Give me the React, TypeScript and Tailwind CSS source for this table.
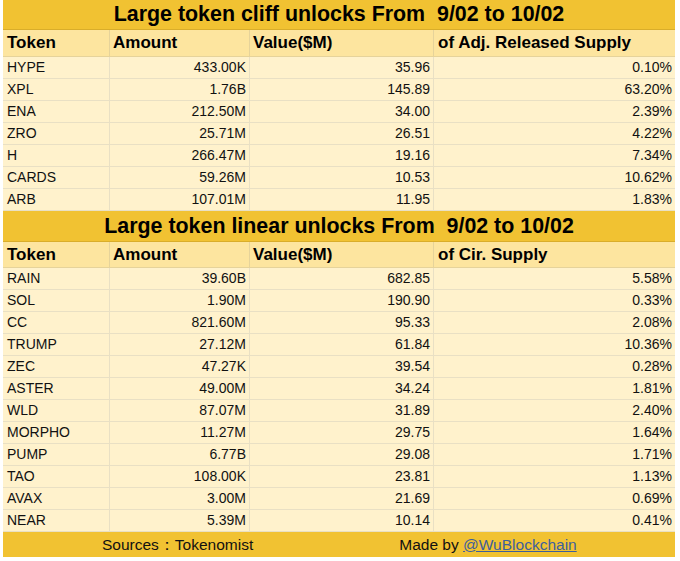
import React from "react";

const cliff: [string, string, string, string][] = [
  ["HYPE", "433.00K", "35.96", "0.10%"],
  ["XPL", "1.76B", "145.89", "63.20%"],
  ["ENA", "212.50M", "34.00", "2.39%"],
  ["ZRO", "25.71M", "26.51", "4.22%"],
  ["H", "266.47M", "19.16", "7.34%"],
  ["CARDS", "59.26M", "10.53", "10.62%"],
  ["ARB", "107.01M", "11.95", "1.83%"],
];

const linear: [string, string, string, string][] = [
  ["RAIN", "39.60B", "682.85", "5.58%"],
  ["SOL", "1.90M", "190.90", "0.33%"],
  ["CC", "821.60M", "95.33", "2.08%"],
  ["TRUMP", "27.12M", "61.84", "10.36%"],
  ["ZEC", "47.27K", "39.54", "0.28%"],
  ["ASTER", "49.00M", "34.24", "1.81%"],
  ["WLD", "87.07M", "31.89", "2.40%"],
  ["MORPHO", "11.27M", "29.75", "1.64%"],
  ["PUMP", "6.77B", "29.08", "1.71%"],
  ["TAO", "108.00K", "23.81", "1.13%"],
  ["AVAX", "3.00M", "21.69", "0.69%"],
  ["NEAR", "5.39M", "10.14", "0.41%"],
];

const cols = "grid grid-cols-[107px_140px_184px_241px]";

function Section({
  title,
  last,
  rows,
  titleH,
  headH,
}: {
  title: string;
  last: string;
  rows: [string, string, string, string][];
  titleH: string;
  headH: string;
}) {
  return (
    <div>
      <div
        className={`${titleH} bg-[#f1c232] border-b border-[#d9ad2a] flex items-center justify-center text-[21.4px] font-bold text-black whitespace-pre`}
      >
        {title}
      </div>
      <div className={`${cols} ${headH} bg-[#fde59f] border-b border-[#e6d39a] text-[17px] font-bold text-black`}>
        <div className="pl-[4px] flex items-center border-r border-[#e6d39a]">Token</div>
        <div className="pl-[3px] flex items-center border-r border-[#e6d39a]">Amount</div>
        <div className="pl-[3px] flex items-center border-r border-[#e6d39a]">Value($M)</div>
        <div className="pl-[4px] flex items-center">{last}</div>
      </div>
      {rows.map((r, i) => (
        <div key={i} className={`${cols} h-[22px] bg-[#fff2cc] border-b border-[#e9e0c4] text-[14px] text-[#111]`}>
          <div className="pl-[4px] flex items-center border-r border-[#e9e0c4]">{r[0]}</div>
          <div className="pr-[3px] flex items-center justify-end border-r border-[#e9e0c4]">{r[1]}</div>
          <div className="pr-[3px] flex items-center justify-end border-r border-[#e9e0c4]">{r[2]}</div>
          <div className="pr-[3px] flex items-center justify-end">{r[3]}</div>
        </div>
      ))}
    </div>
  );
}

export default function App() {
  return (
    <div
      className="w-[680px] h-[561px] bg-white overflow-hidden"
      style={{ fontFamily: '"Liberation Sans", Arial, sans-serif' }}
    >
      <div className="ml-[3px] w-[672px]">
        <Section
          title={"Large token cliff unlocks From  9/02 to 10/02"}
          last="of Adj. Released Supply"
          rows={cliff}
          titleH="h-[30px]"
          headH="h-[27px]"
        />
        <Section
          title={"Large token linear unlocks From  9/02 to 10/02"}
          last="of Cir. Supply"
          rows={linear}
          titleH="h-[31px]"
          headH="h-[26px]"
        />
        <div className="h-[25px] bg-[#f1c232] flex items-center text-[15.5px] text-[#111] whitespace-pre">
          <span className="ml-[99px]">Sources：Tokenomist</span>
          <span className="ml-[146px]">
            Made by <span className="text-[#3e5f9c] underline">@WuBlockchain</span>
          </span>
        </div>
      </div>
    </div>
  );
}
